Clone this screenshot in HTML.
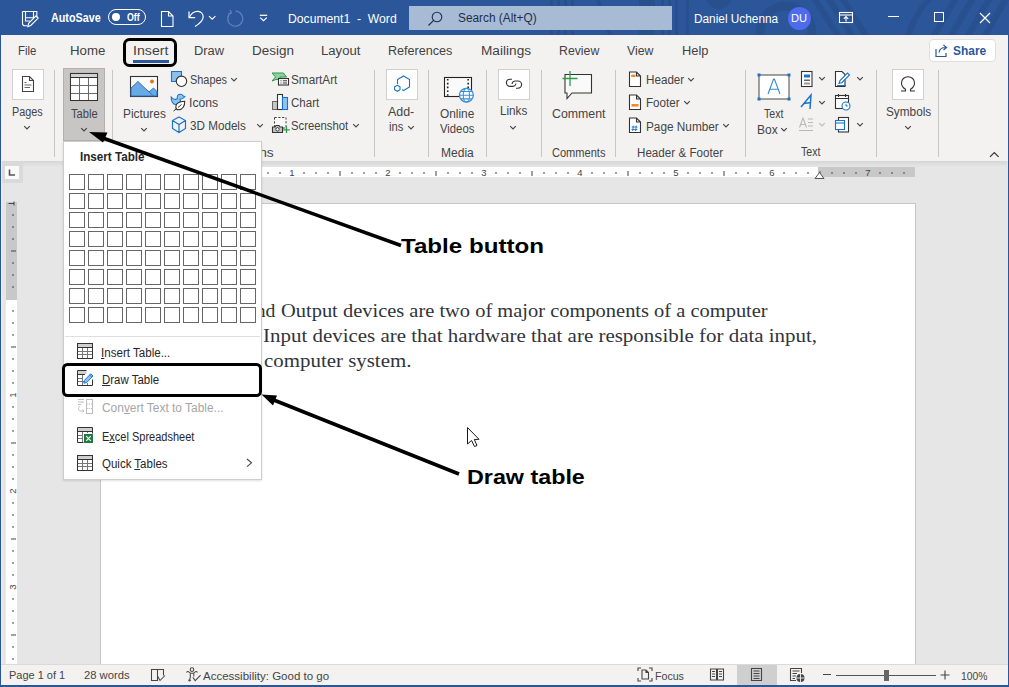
<!DOCTYPE html>
<html><head><meta charset="utf-8">
<style>
*{box-sizing:border-box}
html,body{margin:0;padding:0}
body{width:1009px;height:687px;overflow:hidden;position:relative;background:#e6e6e6;font-family:'Liberation Sans',sans-serif}
.a{position:absolute}
.t{position:absolute;white-space:nowrap;line-height:1;transform-origin:0 0}
svg{position:absolute;overflow:visible}
</style></head><body>
<!-- title bar -->
<div class="a" style="left:0;top:0;width:1009px;height:35px;background:#2b579a;overflow:hidden">
 <svg style="left:0;top:0" width="1009" height="35">
  <g fill="#28508f">
   <rect x="550" y="0" width="3" height="35"/><rect x="557" y="0" width="3" height="35"/><rect x="564" y="0" width="3" height="35"/><rect x="571" y="0" width="3" height="35"/>
   <polygon points="596,0 600,0 612,35 608,35"/>
   <rect x="639" y="0" width="16" height="35"/>
   <rect x="661" y="0" width="3" height="35"/><rect x="668" y="0" width="3" height="35"/><rect x="675" y="0" width="3" height="35"/>
   <rect x="686" y="0" width="3" height="35"/>
   <polygon points="812,0 819,0 841,35 834,35"/><polygon points="826,0 833,0 855,35 848,35"/><polygon points="840,0 847,0 869,35 862,35"/>
   <polygon points="931,35 951,0 958,0 938,35"/><polygon points="948,35 968,0 975,0 955,35"/><polygon points="965,35 985,0 992,0 972,35"/><polygon points="982,35 1002,0 1009,0 989,35"/>
  </g>
  <circle cx="719" cy="-4" r="13" fill="#28508f"/>
  <circle cx="786" cy="32" r="26" fill="none" stroke="#28508f" stroke-width="9"/>
  <path d="M905 35 C910 22 915 10 925 0 L932 0 C922 10 916 22 912 35 Z" fill="#28508f"/>
 </svg>
</div>
<!-- search box -->
<div class="a" style="left:409px;top:6px;width:263px;height:24px;background:#a8bbd5"></div>
<svg style="left:426px;top:10px" width="20" height="18"><circle cx="11" cy="7" r="4.8" fill="none" stroke="#1e2f4a" stroke-width="1.1"/><line x1="7.6" y1="10.4" x2="2.5" y2="15.5" stroke="#1e2f4a" stroke-width="1.2"/></svg>
<!-- title bar icons -->
<svg style="left:21px;top:10px" width="19" height="19" fill="none" stroke="#fff" stroke-width="1.1">
 <path d="M1.5 1.5 H15.8 V7.2"/>
 <path d="M1.5 1.5 V13.2 Q1.5 15.8 4 15.8 H6.2"/>
 <path d="M4.5 1.5 V7.8 H12.5 V1.5"/>
 <path d="M4.5 7.8 V11 H9"/>
 <path d="M6.8 16.6 L7.6 13.3 L15 5.9 L17.2 8.1 L9.8 15.5 Z"/>
</svg>
<div class="a" style="left:108px;top:9px;width:38px;height:16px;border:1.1px solid #fff;border-radius:8px"></div>
<div class="a" style="left:112px;top:13px;width:8px;height:8px;background:#fff;border-radius:50%"></div>
<svg style="left:160px;top:10px" width="15" height="18" fill="none" stroke="#fff" stroke-width="1.1"><path d="M1.5 1.5 H8.5 L13 6 V16.5 H1.5 Z M8.5 1.5 V6 H13"/></svg>
<svg style="left:187px;top:9px" width="20" height="20" fill="none" stroke="#fff" stroke-width="1.2"><path d="M2 2.5 V8.6 H8.2"/><path d="M2.4 8.2 C4.5 4.2 8 2.2 11 2.4 C14 2.6 16.2 5 16.2 8 C16.2 11 13.5 14 8 17.6"/></svg>
<svg style="left:208px;top:15px" width="9" height="6" fill="none" stroke="#fff" stroke-width="1.1"><path d="M1 1.2 L4.2 4.2 L7.4 1.2"/></svg>
<svg style="left:225px;top:9px" width="20" height="20" fill="none" stroke="#5f82bb" stroke-width="1.2"><path d="M6 3.5 A7.5 7.5 0 1 0 10.5 2.2"/><path d="M5 1 L6.5 4 L3.5 5"/></svg>
<svg style="left:258px;top:13px" width="11" height="10" fill="none" stroke="#fff" stroke-width="1.25"><path d="M1.8 2.3 H9.2"/><path d="M2.2 4.6 L5.5 7.6 L8.8 4.6"/></svg>
<!-- avatar -->
<div class="a" style="left:788px;top:7px;width:23px;height:23px;background:#4f6bed;border-radius:50%"></div>
<svg style="left:838px;top:11px" width="16" height="14" fill="none" stroke="#fff" stroke-width="1.1"><rect x="1.5" y="1.5" width="13" height="10"/><path d="M1.5 4 H14.5"/><path d="M8 10.5 V5.5 M5.8 7.8 L8 5.5 L10.2 7.8"/></svg>
<div class="a" style="left:888px;top:16px;width:11px;height:1.2px;background:#fff"></div>
<div class="a" style="left:934px;top:12px;width:10px;height:10px;border:1.1px solid #fff"></div>
<svg style="left:979px;top:12px" width="12" height="12" stroke="#fff" stroke-width="1.2"><path d="M1 1 L11 11 M11 1 L1 11"/></svg>

<!-- ribbon -->
<div class="a" style="left:0;top:35px;width:1009px;height:126px;background:#f3f2f1;border-left:1px solid #2b579a;border-right:1px solid #2b579a"></div>
<!-- insert underline -->
<div class="a" style="left:133px;top:60px;width:36px;height:3px;background:#2b579a"></div>
<!-- share button -->
<div class="a" style="left:929px;top:39px;width:67px;height:23px;background:#fff;border:1px solid #e1dfdd;border-radius:4px"></div>
<svg style="left:935px;top:43px" width="14" height="15" fill="none" stroke="#2b579a" stroke-width="1.2"><path d="M1 6 V13.5 H11 V10"/><path d="M4 9.5 C4.5 6 7 4.5 10.5 4.5 M8.5 2 L11.5 4.5 L8.5 7"/></svg>

<!-- separators -->
<div class="a" style="left:54px;top:70px;width:1px;height:87px;background:#c8c6c4"></div>
<div class="a" style="left:112px;top:70px;width:1px;height:87px;background:#c8c6c4"></div>
<div class="a" style="left:374px;top:70px;width:1px;height:87px;background:#c8c6c4"></div>
<div class="a" style="left:428px;top:70px;width:1px;height:87px;background:#c8c6c4"></div>
<div class="a" style="left:486px;top:70px;width:1px;height:87px;background:#c8c6c4"></div>
<div class="a" style="left:541px;top:70px;width:1px;height:87px;background:#c8c6c4"></div>
<div class="a" style="left:615px;top:70px;width:1px;height:87px;background:#c8c6c4"></div>
<div class="a" style="left:745px;top:70px;width:1px;height:87px;background:#c8c6c4"></div>
<div class="a" style="left:876px;top:70px;width:1px;height:87px;background:#c8c6c4"></div>
<div class="a" style="left:938px;top:70px;width:1px;height:87px;background:#c8c6c4"></div>

<!-- Pages -->
<div class="a" style="left:12px;top:69px;width:32px;height:31px;background:#fff;border:1px solid #d2d0ce"></div>
<svg style="left:21px;top:75px" width="14" height="18" fill="none" stroke="#444" stroke-width="1.1"><path d="M1.5 1.5 H8.5 L12.5 5.5 V16.5 H1.5 Z M8.5 1.5 V5.5 H12.5"/><path d="M3.5 7.5 H5.5 M3.5 10 H10.5 M3.5 12.5 H9" stroke="#666"/></svg>
<!-- Table button pressed -->
<div class="a" style="left:63px;top:68px;width:42px;height:73px;background:#c8c6c4;border:1px solid #b3b0ad"></div>
<svg style="left:69px;top:72px" width="31" height="30" fill="none" stroke="#333" stroke-width="1.05">
 <rect x="1.5" y="1.5" width="27" height="27" fill="#fff"/>
 <rect x="1.5" y="1.5" width="27" height="4" fill="#d4d4d4"/>
 <path d="M2 13.5 H28 M2 21.5 H28 M10.5 6 V28 M19.5 6 V28" stroke="#6a6a6a"/>
</svg>
<!-- Pictures -->
<svg style="left:129px;top:75px" width="31" height="23">
 <rect x="1.5" y="1.5" width="27" height="20" fill="#fafafa" stroke="#333" stroke-width="1.1"/>
 <path d="M2 21 V13 L9 6.5 L20 17 L24.5 13 L28 16.5 V21 Z" fill="#69a9e4" stroke="#2b6cb8" stroke-width="0.9"/>
 <path d="M17.5 14.5 L24.5 21" stroke="#2b6cb8" stroke-width="0.9"/>
 <circle cx="23" cy="6.5" r="1.9" fill="#e8711a"/>
</svg>
<!-- Shapes -->
<svg style="left:170px;top:70px" width="19" height="18">
 <path d="M1.5 1.5 H11.5 V6 A5.5 5.5 0 0 0 6 11.5 H1.5 Z" fill="#8cc0ec" stroke="#1a73c8" stroke-width="1.1"/>
 <circle cx="11.5" cy="11.3" r="5.2" fill="#fff" stroke="#333" stroke-width="1.1"/>
</svg>
<!-- Icons -->
<svg style="left:166px;top:90px" width="24" height="24">
 <path d="M5.2 7 C5 11 7 14.5 9.5 14.5 C12 14.5 14.5 12.5 14.5 10.5 L14 9.3 C16 9 18.6 7.3 18.9 6.6 L17.3 6 C16.8 5 15.8 4.2 14.2 4.2 C12.2 4.2 11 5.5 11.2 8.8 C9.5 9.8 7 9.2 5.2 7 Z" fill="#8dc4f0" stroke="#1a73c8" stroke-width="1.1"/>
 <path d="M18.7 11.2 C13 11.3 9.8 13.5 9.8 17 C9.8 19 11.2 19.8 12.7 19.8 C16.5 19.8 19 16 18.7 11.2 Z" fill="#fff" stroke="#333" stroke-width="1.1"/>
 <path d="M10.8 18.6 L7.5 21 M12 17.5 L15.5 14.5" fill="none" stroke="#333" stroke-width="1"/>
</svg>
<!-- 3D Models -->
<svg style="left:171px;top:116px" width="16" height="18" fill="none" stroke="#1a73c8" stroke-width="1.2">
 <path d="M8 1 L14.5 4.5 V12.5 L8 16.5 L1.5 12.5 V4.5 Z M1.5 4.5 L8 8.5 L14.5 4.5 M8 8.5 V16.5"/>
</svg>
<svg style="left:255.6px;top:122.9px" width="9" height="6" fill="none" stroke="#444" stroke-width="1.15"><path d="M1.2 1.2 L4 4 L6.8 1.2"/></svg>
<!-- SmartArt -->
<svg style="left:271px;top:72px" width="19" height="14">
 <path d="M1 1 H12.5 L15.5 5 H9 V7.5 H5 L1 9 L4.5 5 Z" fill="#8fd19e" stroke="#2e9b47" stroke-width="1"/>
 <rect x="7.5" y="6.5" width="10" height="6.5" fill="#fff" stroke="#333" stroke-width="1.1"/>
 <path d="M9.5 8.8 H10.5 M11.8 8.8 H16 M9.5 11 H10.5 M11.8 11 H16" stroke="#333" stroke-width="1"/>
</svg>
<!-- Chart -->
<svg style="left:271px;top:93px" width="19" height="18">
 <rect x="1.5" y="8.5" width="5" height="8" fill="#c8c6c4" stroke="#666" stroke-width="1"/>
 <rect x="6.5" y="1.5" width="5" height="15" fill="#fff" stroke="#333" stroke-width="1.1"/>
 <rect x="11.5" y="4.5" width="5" height="12" fill="#8dc4f0" stroke="#1a73c8" stroke-width="1.1"/>
</svg>
<!-- Screenshot -->
<svg style="left:271px;top:116px" width="20" height="18">
 <rect x="3.5" y="1.5" width="11.5" height="10.5" fill="#f8f8f8" stroke="#444" stroke-width="1" stroke-dasharray="2.2 1.6"/>
 <path d="M1.5 11 H4 L5 9.5 H8 L9 11 H11.5 V16.5 H1.5 Z" fill="#c8c6c4" stroke="#333" stroke-width="1.1"/>
 <circle cx="6.5" cy="13.3" r="1.7" fill="#fff" stroke="#333" stroke-width="1"/>
 <path d="M15.5 10.5 V17 M12.2 13.8 H18.8" stroke="#2e9b47" stroke-width="1.3"/>
</svg>
<svg style="left:229.6px;top:77.2px" width="9" height="6" fill="none" stroke="#444" stroke-width="1.15"><path d="M1.2 1.2 L4 4 L6.8 1.2"/></svg>
<svg style="left:351.9px;top:122.9px" width="9" height="6" fill="none" stroke="#444" stroke-width="1.15"><path d="M1.2 1.2 L4 4 L6.8 1.2"/></svg>
<!-- Add-ins -->
<div class="a" style="left:386px;top:69px;width:32px;height:31px;background:#fff;border:1px solid #d2d0ce"></div>
<svg style="left:393px;top:74px" width="20" height="20" fill="none" stroke="#1a73c8" stroke-width="1.1">
 <path d="M4.5 10 V5.5 L10.5 2 L16.5 5.5 V13 L10.5 16.5 L9 15.6"/>
 <path d="M4.3 11.3 L7 12.8 V15.8 L4.3 17.3 L1.6 15.8 V12.8 Z"/>
</svg>
<svg style="left:406.8px;top:124.7px" width="9" height="6" fill="none" stroke="#444" stroke-width="1.15"><path d="M1.2 1.2 L4 4 L6.8 1.2"/></svg>
<!-- Online Videos -->
<svg style="left:443px;top:76px" width="36" height="30">
 <rect x="1.5" y="1.5" width="27" height="19" fill="#fafafa" stroke="#222" stroke-width="1.1"/>
 <path d="M4.7 3 V20 M25.2 3 V20" stroke="#222" stroke-width="1.6" stroke-dasharray="1.6 2.2"/>
 <circle cx="23.4" cy="19.2" r="6.9" fill="#fff" stroke="#3a8fd8" stroke-width="1.3"/>
 <path d="M16.5 19.2 H30.3 M17.8 15.5 H29 M17.8 22.9 H29" stroke="#3a8fd8" stroke-width="1.1"/>
 <ellipse cx="23.4" cy="19.2" rx="3.1" ry="6.9" fill="none" stroke="#3a8fd8" stroke-width="1.1"/>
</svg>
<!-- Links -->
<div class="a" style="left:498px;top:69px;width:32px;height:31px;background:#fff;border:1px solid #d2d0ce"></div>
<svg style="left:504px;top:77px" width="20" height="14" fill="none" stroke="#333" stroke-width="1.15">
 <path d="M8 2.2 H6 A3.6 3.6 0 0 0 6 9.4 H9 A3.6 3.6 0 0 0 12 6.5"/>
 <path d="M12 11.2 H14 A3.6 3.6 0 0 0 14 4 H11 A3.6 3.6 0 0 0 8 7"/>
</svg>
<svg style="left:509.4px;top:124.7px" width="9" height="6" fill="none" stroke="#444" stroke-width="1.15"><path d="M1.2 1.2 L4 4 L6.8 1.2"/></svg>
<!-- Comment -->
<svg style="left:560px;top:70px" width="34" height="31">
 <path d="M5 4.5 H31.5 V23 H12 L7 28.5 V23 H5 Z" fill="#fafafa" stroke="#333" stroke-width="1.1"/>
 <path d="M10 1 V16 M2.5 8.5 H17.5" stroke="#2e9b47" stroke-width="1.3"/>
</svg>
<!-- Header / Footer / Page Number -->
<svg style="left:628px;top:71px" width="14" height="17">
 <path d="M1.5 1 H8.5 L12.5 5 V15.5 H1.5 Z M8.5 1 V5 H12.5" fill="#fff" stroke="#333" stroke-width="1.1"/>
 <rect x="3.2" y="3.6" width="4.3" height="2.4" fill="#ef8a2e"/>
</svg>
<svg style="left:628px;top:94px" width="14" height="17">
 <path d="M1.5 1 H8.5 L12.5 5 V15.5 H1.5 Z M8.5 1 V5 H12.5" fill="#fff" stroke="#333" stroke-width="1.1"/>
 <rect x="3.5" y="10" width="7" height="2.6" fill="#ef8a2e"/>
</svg>
<svg style="left:628px;top:117px" width="14" height="17">
 <path d="M1.5 1 H8.5 L12.5 5 V15.5 H1.5 Z M8.5 1 V5 H12.5" fill="#fff" stroke="#333" stroke-width="1.1"/>
 <path d="M5.3 8.5 L4.7 14 M8.3 8.5 L7.7 14 M3.7 10 H9.5 M3.5 12.5 H9.3" stroke="#1a73c8" stroke-width="0.9"/>
</svg>
<svg style="left:686.9px;top:77.1px" width="9" height="6" fill="none" stroke="#444" stroke-width="1.15"><path d="M1.2 1.2 L4 4 L6.8 1.2"/></svg>
<svg style="left:682.7px;top:100.0px" width="9" height="6" fill="none" stroke="#444" stroke-width="1.15"><path d="M1.2 1.2 L4 4 L6.8 1.2"/></svg>
<svg style="left:721.5px;top:123.4px" width="9" height="6" fill="none" stroke="#444" stroke-width="1.15"><path d="M1.2 1.2 L4 4 L6.8 1.2"/></svg>
<!-- Text Box -->
<svg style="left:757px;top:73px" width="34" height="28">
 <rect x="2" y="2" width="30" height="24" fill="#fff" stroke="#444" stroke-width="1"/>
 <g fill="#1a73c8"><rect x="0.5" y="0.5" width="3" height="3"/><rect x="30.5" y="0.5" width="3" height="3"/><rect x="0.5" y="24.5" width="3" height="3"/><rect x="30.5" y="24.5" width="3" height="3"/></g>
 <path d="M11 21 L16.6 6 H17.4 L23 21 M12.8 16.2 H21.2" fill="none" stroke="#2f8ad8" stroke-width="1.1"/>
</svg>
<svg style="left:780.4px;top:127.1px" width="9" height="6" fill="none" stroke="#444" stroke-width="1.15"><path d="M1.2 1.2 L4 4 L6.8 1.2"/></svg>
<!-- quick parts -->
<svg style="left:800px;top:70px" width="14" height="18">
 <rect x="1.5" y="1.5" width="10.5" height="15" fill="#fff" stroke="#333" stroke-width="1.1"/>
 <rect x="4" y="4.5" width="6" height="3" fill="#1a73c8"/>
 <rect x="4" y="9.5" width="6" height="1.5" fill="#666"/><rect x="4" y="12.5" width="6" height="2" fill="#999"/>
</svg>
<!-- wordart -->
<svg style="left:799px;top:93px" width="16" height="18" fill="none" stroke="#1a73c8" stroke-width="1.5"><path d="M2 14 L12 2 L11 16 M5 10.5 L12 9.5"/></svg>
<!-- drop cap disabled -->
<svg style="left:798px;top:116px" width="16" height="17" fill="none" stroke="#b8b8b8" stroke-width="1.1"><path d="M1.5 11.5 L5 2 L8.5 11.5 M2.8 8.5 H7.2 M10 3 H15 M10 6.5 H15 M10 10 H15 M1 14.5 H15"/></svg>
<svg style="left:817.8px;top:99.7px" width="9" height="6" fill="none" stroke="#444" stroke-width="1.15"><path d="M1.2 1.2 L4 4 L6.8 1.2"/></svg>
<svg style="left:817.8px;top:76.4px" width="9" height="6" fill="none" stroke="#444" stroke-width="1.15"><path d="M1.2 1.2 L4 4 L6.8 1.2"/></svg>
<svg style="left:817.8px;top:121.8px" width="9" height="6" fill="none" stroke="#bbb" stroke-width="1.15"><path d="M1.2 1.2 L4 4 L6.8 1.2"/></svg>
<!-- signature line -->
<svg style="left:834px;top:70px" width="17" height="18">
 <path d="M1.5 1.5 H8 L11 4.5 V16.5 H1.5 Z" fill="#fff" stroke="#333" stroke-width="1.1"/>
 <path d="M5 13.5 L6 10.5 L13.5 3 L15.5 5 L8 12.5 Z" fill="#fff" stroke="#1a73c8" stroke-width="1.1"/>
 <path d="M3 15.5 H12" stroke="#1a73c8" stroke-width="1"/>
</svg>
<!-- date time -->
<svg style="left:834px;top:93px" width="17" height="18">
 <rect x="1.5" y="2.5" width="13" height="13" fill="#fff" stroke="#333" stroke-width="1.1"/>
 <path d="M1.5 5.5 H14.5 M4.5 1 V4 M11.5 1 V4" stroke="#333" stroke-width="1.1"/>
 <circle cx="12" cy="13" r="4" fill="#fff" stroke="#1a73c8" stroke-width="1.1"/>
 <path d="M12 10.8 V13 H13.8" stroke="#1a73c8" stroke-width="1" fill="none"/>
</svg>
<!-- object -->
<svg style="left:834px;top:116px" width="17" height="18">
 <rect x="4.5" y="1.5" width="10" height="14.5" fill="#fff" stroke="#333" stroke-width="1.1"/>
 <rect x="1.5" y="4.5" width="9" height="9" fill="#fff" stroke="#1a73c8" stroke-width="1.1"/>
 <path d="M1.5 7 H10.5" stroke="#1a73c8" stroke-width="1.1"/>
</svg>
<svg style="left:856.0px;top:76.4px" width="9" height="6" fill="none" stroke="#444" stroke-width="1.15"><path d="M1.2 1.2 L4 4 L6.8 1.2"/></svg>
<svg style="left:856.0px;top:121.8px" width="9" height="6" fill="none" stroke="#444" stroke-width="1.15"><path d="M1.2 1.2 L4 4 L6.8 1.2"/></svg>
<!-- Symbols -->
<div class="a" style="left:892px;top:69px;width:32px;height:31px;background:#fff;border:1px solid #d2d0ce"></div>
<svg style="left:900px;top:76px" width="17" height="17" fill="none" stroke="#333" stroke-width="1.1"><path d="M1 15 H5.5 V13.3 C3 11.8 1.5 9.5 1.5 7 C1.5 3.3 4.3 0.8 8 0.8 C11.7 0.8 14.5 3.3 14.5 7 C14.5 9.5 13 11.8 10.5 13.3 V15 H15"/></svg>
<svg style="left:903.8px;top:124.8px" width="9" height="6" fill="none" stroke="#444" stroke-width="1.15"><path d="M1.2 1.2 L4 4 L6.8 1.2"/></svg>
<svg style="left:989px;top:151px" width="12" height="8" fill="none" stroke="#333" stroke-width="1.2"><path d="M1 5.8 L5.3 1.5 L9.6 5.8"/></svg>
<!-- chevrons under big buttons -->
<svg style="left:23.2px;top:125.0px" width="9" height="6" fill="none" stroke="#444" stroke-width="1.15"><path d="M1.2 1.2 L4 4 L6.8 1.2"/></svg>
<svg style="left:79.6px;top:126.9px" width="9" height="6" fill="none" stroke="#444" stroke-width="1.15"><path d="M1.2 1.2 L4 4 L6.8 1.2"/></svg>
<svg style="left:139.6px;top:126.8px" width="9" height="6" fill="none" stroke="#444" stroke-width="1.15"><path d="M1.2 1.2 L4 4 L6.8 1.2"/></svg>

<!-- ribbon shadow -->
<div class="a" style="left:1px;top:161px;width:1006px;height:6px;background:linear-gradient(#d6d6d6,#e6e6e6)"></div>
<!-- tab selector -->
<div class="a" style="left:1px;top:162px;width:22px;height:21px;background:#dadada"></div>
<div class="a" style="left:5px;top:166px;width:14px;height:13px;background:#fafafa"></div>
<svg style="left:8px;top:169px" width="8" height="8" fill="none" stroke="#555" stroke-width="1.6"><path d="M1.5 0.5 V6 H7"/></svg>
<!-- horizontal ruler -->
<div class="a" style="left:100px;top:167px;width:96px;height:10px;background:#c8c8c8"></div>
<div class="a" style="left:196px;top:167px;width:622px;height:10px;background:#fff"></div>
<div class="a" style="left:818px;top:167px;width:97px;height:10px;background:#c8c8c8"></div>

<!-- vertical ruler -->
<div class="a" style="left:6px;top:202px;width:11px;height:98px;background:#c8c8c8"></div>
<div class="a" style="left:6px;top:300px;width:11px;height:365px;background:#fff"></div>

<!-- page -->
<div class="a" style="left:100px;top:203px;width:816px;height:470px;background:#fff;border:1px solid #c6c6c6"></div>

<svg style="left:0;top:0" width="1009" height="687"><rect x="111.5" y="172" width="1" height="2" fill="#444"/><rect x="123.5" y="172" width="1" height="2" fill="#444"/><rect x="135.5" y="172" width="1" height="2" fill="#444"/><rect x="147.5" y="171" width="1" height="5" fill="#444"/><rect x="159.5" y="172" width="1" height="2" fill="#444"/><rect x="171.5" y="172" width="1" height="2" fill="#444"/><rect x="183.5" y="172" width="1" height="2" fill="#444"/><rect x="207.5" y="172" width="1" height="2" fill="#444"/><rect x="219.5" y="172" width="1" height="2" fill="#444"/><rect x="231.5" y="172" width="1" height="2" fill="#444"/><rect x="243.5" y="171" width="1" height="5" fill="#444"/><rect x="255.5" y="172" width="1" height="2" fill="#444"/><rect x="267.5" y="172" width="1" height="2" fill="#444"/><rect x="279.5" y="172" width="1" height="2" fill="#444"/><text x="292" y="176" font-size="9.5" text-anchor="middle" fill="#444" font-family="Liberation Sans">1</text><rect x="303.5" y="172" width="1" height="2" fill="#444"/><rect x="315.5" y="172" width="1" height="2" fill="#444"/><rect x="327.5" y="172" width="1" height="2" fill="#444"/><rect x="339.5" y="171" width="1" height="5" fill="#444"/><rect x="351.5" y="172" width="1" height="2" fill="#444"/><rect x="363.5" y="172" width="1" height="2" fill="#444"/><rect x="375.5" y="172" width="1" height="2" fill="#444"/><text x="388" y="176" font-size="9.5" text-anchor="middle" fill="#444" font-family="Liberation Sans">2</text><rect x="399.5" y="172" width="1" height="2" fill="#444"/><rect x="411.5" y="172" width="1" height="2" fill="#444"/><rect x="423.5" y="172" width="1" height="2" fill="#444"/><rect x="435.5" y="171" width="1" height="5" fill="#444"/><rect x="447.5" y="172" width="1" height="2" fill="#444"/><rect x="459.5" y="172" width="1" height="2" fill="#444"/><rect x="471.5" y="172" width="1" height="2" fill="#444"/><text x="484" y="176" font-size="9.5" text-anchor="middle" fill="#444" font-family="Liberation Sans">3</text><rect x="495.5" y="172" width="1" height="2" fill="#444"/><rect x="507.5" y="172" width="1" height="2" fill="#444"/><rect x="519.5" y="172" width="1" height="2" fill="#444"/><rect x="531.5" y="171" width="1" height="5" fill="#444"/><rect x="543.5" y="172" width="1" height="2" fill="#444"/><rect x="555.5" y="172" width="1" height="2" fill="#444"/><rect x="567.5" y="172" width="1" height="2" fill="#444"/><text x="580" y="176" font-size="9.5" text-anchor="middle" fill="#444" font-family="Liberation Sans">4</text><rect x="591.5" y="172" width="1" height="2" fill="#444"/><rect x="603.5" y="172" width="1" height="2" fill="#444"/><rect x="615.5" y="172" width="1" height="2" fill="#444"/><rect x="627.5" y="171" width="1" height="5" fill="#444"/><rect x="639.5" y="172" width="1" height="2" fill="#444"/><rect x="651.5" y="172" width="1" height="2" fill="#444"/><rect x="663.5" y="172" width="1" height="2" fill="#444"/><text x="676" y="176" font-size="9.5" text-anchor="middle" fill="#444" font-family="Liberation Sans">5</text><rect x="687.5" y="172" width="1" height="2" fill="#444"/><rect x="699.5" y="172" width="1" height="2" fill="#444"/><rect x="711.5" y="172" width="1" height="2" fill="#444"/><rect x="723.5" y="171" width="1" height="5" fill="#444"/><rect x="735.5" y="172" width="1" height="2" fill="#444"/><rect x="747.5" y="172" width="1" height="2" fill="#444"/><rect x="759.5" y="172" width="1" height="2" fill="#444"/><text x="772" y="176" font-size="9.5" text-anchor="middle" fill="#444" font-family="Liberation Sans">6</text><rect x="783.5" y="172" width="1" height="2" fill="#444"/><rect x="795.5" y="172" width="1" height="2" fill="#444"/><rect x="807.5" y="172" width="1" height="2" fill="#444"/><rect x="819.5" y="171" width="1" height="5" fill="#444"/><rect x="831.5" y="172" width="1" height="2" fill="#444"/><rect x="843.5" y="172" width="1" height="2" fill="#444"/><rect x="855.5" y="172" width="1" height="2" fill="#444"/><text x="868" y="176" font-size="9.5" text-anchor="middle" fill="#444" font-family="Liberation Sans">7</text><rect x="879.5" y="172" width="1" height="2" fill="#444"/><rect x="891.5" y="172" width="1" height="2" fill="#444"/><rect x="903.5" y="172" width="1" height="2" fill="#444"/><path d="M815 178.5 L819.5 172.5 L824 178.5 Z" fill="#fff" stroke="#555" stroke-width="1"/></svg>
<svg style="left:0;top:0" width="1009" height="687"><rect x="12" y="214.5" width="2" height="1" fill="#444"/><rect x="12" y="226.5" width="2" height="1" fill="#444"/><rect x="12" y="238.5" width="2" height="1" fill="#444"/><rect x="11" y="250.5" width="5" height="1" fill="#444"/><rect x="12" y="262.5" width="2" height="1" fill="#444"/><rect x="12" y="274.5" width="2" height="1" fill="#444"/><rect x="12" y="286.5" width="2" height="1" fill="#444"/><rect x="12" y="310.5" width="2" height="1" fill="#444"/><rect x="12" y="322.5" width="2" height="1" fill="#444"/><rect x="12" y="334.5" width="2" height="1" fill="#444"/><rect x="11" y="346.5" width="5" height="1" fill="#444"/><rect x="12" y="358.5" width="2" height="1" fill="#444"/><rect x="12" y="370.5" width="2" height="1" fill="#444"/><rect x="12" y="382.5" width="2" height="1" fill="#444"/><text x="0" y="0" transform="translate(16.3 395) rotate(-90)" font-size="9.5" text-anchor="middle" fill="#444" font-family="Liberation Sans">1</text><rect x="12" y="406.5" width="2" height="1" fill="#444"/><rect x="12" y="418.5" width="2" height="1" fill="#444"/><rect x="12" y="430.5" width="2" height="1" fill="#444"/><rect x="11" y="442.5" width="5" height="1" fill="#444"/><rect x="12" y="454.5" width="2" height="1" fill="#444"/><rect x="12" y="466.5" width="2" height="1" fill="#444"/><rect x="12" y="478.5" width="2" height="1" fill="#444"/><text x="0" y="0" transform="translate(16.3 491) rotate(-90)" font-size="9.5" text-anchor="middle" fill="#444" font-family="Liberation Sans">2</text><rect x="12" y="502.5" width="2" height="1" fill="#444"/><rect x="12" y="514.5" width="2" height="1" fill="#444"/><rect x="12" y="526.5" width="2" height="1" fill="#444"/><rect x="11" y="538.5" width="5" height="1" fill="#444"/><rect x="12" y="550.5" width="2" height="1" fill="#444"/><rect x="12" y="562.5" width="2" height="1" fill="#444"/><rect x="12" y="574.5" width="2" height="1" fill="#444"/><text x="0" y="0" transform="translate(16.3 587) rotate(-90)" font-size="9.5" text-anchor="middle" fill="#444" font-family="Liberation Sans">3</text><rect x="12" y="598.5" width="2" height="1" fill="#444"/><rect x="12" y="610.5" width="2" height="1" fill="#444"/><rect x="12" y="622.5" width="2" height="1" fill="#444"/><rect x="11" y="634.5" width="5" height="1" fill="#444"/><rect x="12" y="646.5" width="2" height="1" fill="#444"/><rect x="12" y="658.5" width="2" height="1" fill="#444"/><path d="M8.5 203.5 H14 M14 201.5 V205.5" stroke="#444" stroke-width="1"/></svg>
<div class="t" id="t0" style="left:51.34px;top:11.85px;font-size:12px;color:#ffffff;font-weight:bold;font-family:'Liberation Sans', sans-serif;transform:scaleX(0.8981);">AutoSave</div>
<div class="t" id="t1" style="left:127.00px;top:12.19px;font-size:11px;color:#ffffff;font-weight:bold;font-family:'Liberation Sans', sans-serif;transform:scaleX(0.8015);">Off</div>
<div class="t" id="t2" style="left:287.79px;top:13.05px;font-size:12px;color:#ffffff;font-weight:normal;font-family:'Liberation Sans', sans-serif;transform:scaleX(1.0144);">Document1&nbsp; -&nbsp; Word</div>
<div class="t" id="t3" style="left:458.45px;top:12.15px;font-size:12px;color:#1e2f4a;font-weight:normal;font-family:'Liberation Sans', sans-serif;transform:scaleX(0.9865);">Search (Alt+Q)</div>
<div class="t" id="t4" style="left:693.64px;top:12.65px;font-size:12px;color:#ffffff;font-weight:normal;font-family:'Liberation Sans', sans-serif;transform:scaleX(0.9851);">Daniel Uchenna</div>
<div class="t" id="t5" style="left:791.30px;top:13.19px;font-size:11px;color:#ffffff;font-weight:normal;font-family:'Liberation Sans', sans-serif;transform:scaleX(1.0080);">DU</div>
<div class="t" id="t6" style="left:18.49px;top:44.65px;font-size:12px;color:#424242;font-weight:normal;font-family:'Liberation Sans', sans-serif;transform:scaleX(0.9479);">File</div>
<div class="t" id="t7" style="left:69.62px;top:44.65px;font-size:12px;color:#424242;font-weight:normal;font-family:'Liberation Sans', sans-serif;transform:scaleX(1.1041);">Home</div>
<div class="t" id="t8" style="left:132.50px;top:44.65px;font-size:12px;color:#424242;font-weight:normal;font-family:'Liberation Sans', sans-serif;transform:scaleX(1.1796);">Insert</div>
<div class="t" id="t9" style="left:194.45px;top:44.65px;font-size:12px;color:#424242;font-weight:normal;font-family:'Liberation Sans', sans-serif;transform:scaleX(1.0734);">Draw</div>
<div class="t" id="t10" style="left:252.13px;top:44.65px;font-size:12px;color:#424242;font-weight:normal;font-family:'Liberation Sans', sans-serif;transform:scaleX(1.1241);">Design</div>
<div class="t" id="t11" style="left:321.30px;top:44.65px;font-size:12px;color:#424242;font-weight:normal;font-family:'Liberation Sans', sans-serif;transform:scaleX(1.0931);">Layout</div>
<div class="t" id="t12" style="left:388.30px;top:44.65px;font-size:12px;color:#424242;font-weight:normal;font-family:'Liberation Sans', sans-serif;transform:scaleX(1.0496);">References</div>
<div class="t" id="t13" style="left:480.98px;top:44.65px;font-size:12px;color:#424242;font-weight:normal;font-family:'Liberation Sans', sans-serif;transform:scaleX(1.1370);">Mailings</div>
<div class="t" id="t14" style="left:558.62px;top:44.65px;font-size:12px;color:#424242;font-weight:normal;font-family:'Liberation Sans', sans-serif;transform:scaleX(1.0243);">Review</div>
<div class="t" id="t15" style="left:627.00px;top:44.65px;font-size:12px;color:#424242;font-weight:normal;font-family:'Liberation Sans', sans-serif;transform:scaleX(1.0258);">View</div>
<div class="t" id="t16" style="left:681.98px;top:44.65px;font-size:12px;color:#424242;font-weight:normal;font-family:'Liberation Sans', sans-serif;transform:scaleX(1.0730);">Help</div>
<div class="t" id="t17" style="left:952.68px;top:43.80px;font-size:13px;color:#2b579a;font-weight:bold;font-family:'Liberation Sans', sans-serif;transform:scaleX(0.9194);">Share</div>
<div class="t" id="t18" style="left:12.15px;top:105.85px;font-size:12px;color:#444444;font-weight:normal;font-family:'Liberation Sans', sans-serif;transform:scaleX(0.9054);">Pages</div>
<div class="t" id="t19" style="left:70.68px;top:108.05px;font-size:12px;color:#444444;font-weight:normal;font-family:'Liberation Sans', sans-serif;transform:scaleX(0.9309);">Table</div>
<div class="t" id="t20" style="left:122.62px;top:107.55px;font-size:12px;color:#444444;font-weight:normal;font-family:'Liberation Sans', sans-serif;transform:scaleX(0.9885);">Pictures</div>
<div class="t" id="t21" style="left:190.00px;top:73.85px;font-size:12px;color:#444444;font-weight:normal;font-family:'Liberation Sans', sans-serif;transform:scaleX(0.9091);">Shapes</div>
<div class="t" id="t22" style="left:189.15px;top:96.85px;font-size:12px;color:#444444;font-weight:normal;font-family:'Liberation Sans', sans-serif;transform:scaleX(1.0192);">Icons</div>
<div class="t" id="t23" style="left:190.00px;top:119.85px;font-size:12px;color:#444444;font-weight:normal;font-family:'Liberation Sans', sans-serif;transform:scaleX(0.9729);">3D Models</div>
<div class="t" id="t24" style="left:291.34px;top:73.85px;font-size:12px;color:#444444;font-weight:normal;font-family:'Liberation Sans', sans-serif;transform:scaleX(0.9792);">SmartArt</div>
<div class="t" id="t25" style="left:291.34px;top:96.85px;font-size:12px;color:#444444;font-weight:normal;font-family:'Liberation Sans', sans-serif;transform:scaleX(0.9599);">Chart</div>
<div class="t" id="t26" style="left:291.20px;top:119.85px;font-size:12px;color:#444444;font-weight:normal;font-family:'Liberation Sans', sans-serif;transform:scaleX(0.9418);">Screenshot</div>
<div class="t" id="t27" style="left:388.00px;top:105.85px;font-size:12px;color:#444444;font-weight:normal;font-family:'Liberation Sans', sans-serif;transform:scaleX(1.0337);">Add-</div>
<div class="t" id="t28" style="left:389.30px;top:121.35px;font-size:12px;color:#444444;font-weight:normal;font-family:'Liberation Sans', sans-serif;transform:scaleX(0.9322);">ins</div>
<div class="t" id="t29" style="left:440.49px;top:107.85px;font-size:12px;color:#444444;font-weight:normal;font-family:'Liberation Sans', sans-serif;transform:scaleX(0.9883);">Online</div>
<div class="t" id="t30" style="left:440.40px;top:123.45px;font-size:12px;color:#444444;font-weight:normal;font-family:'Liberation Sans', sans-serif;transform:scaleX(0.9404);">Videos</div>
<div class="t" id="t31" style="left:441.30px;top:146.65px;font-size:12px;color:#444444;font-weight:normal;font-family:'Liberation Sans', sans-serif;transform:scaleX(1.0020);">Media</div>
<div class="t" id="t32" style="left:499.98px;top:105.45px;font-size:12px;color:#444444;font-weight:normal;font-family:'Liberation Sans', sans-serif;transform:scaleX(0.9727);">Links</div>
<div class="t" id="t33" style="left:551.68px;top:108.15px;font-size:12px;color:#444444;font-weight:normal;font-family:'Liberation Sans', sans-serif;transform:scaleX(1.0290);">Comment</div>
<div class="t" id="t34" style="left:551.68px;top:146.85px;font-size:12px;color:#444444;font-weight:normal;font-family:'Liberation Sans', sans-serif;transform:scaleX(0.9205);">Comments</div>
<div class="t" id="t35" style="left:645.62px;top:74.45px;font-size:12px;color:#444444;font-weight:normal;font-family:'Liberation Sans', sans-serif;transform:scaleX(0.9713);">Header</div>
<div class="t" id="t36" style="left:645.62px;top:97.35px;font-size:12px;color:#444444;font-weight:normal;font-family:'Liberation Sans', sans-serif;transform:scaleX(0.9688);">Footer</div>
<div class="t" id="t37" style="left:645.62px;top:120.65px;font-size:12px;color:#444444;font-weight:normal;font-family:'Liberation Sans', sans-serif;transform:scaleX(0.9832);">Page Number</div>
<div class="t" id="t38" style="left:637.30px;top:146.85px;font-size:12px;color:#444444;font-weight:normal;font-family:'Liberation Sans', sans-serif;transform:scaleX(0.9695);">Header &amp; Footer</div>
<div class="t" id="t39" style="left:764.00px;top:107.85px;font-size:12px;color:#444444;font-weight:normal;font-family:'Liberation Sans', sans-serif;transform:scaleX(0.8821);">Text</div>
<div class="t" id="t40" style="left:757.30px;top:123.85px;font-size:12px;color:#444444;font-weight:normal;font-family:'Liberation Sans', sans-serif;transform:scaleX(1.0008);">Box</div>
<div class="t" id="t41" style="left:801.00px;top:146.35px;font-size:12px;color:#444444;font-weight:normal;font-family:'Liberation Sans', sans-serif;transform:scaleX(0.8827);">Text</div>
<div class="t" id="t42" style="left:885.51px;top:105.85px;font-size:12px;color:#444444;font-weight:normal;font-family:'Liberation Sans', sans-serif;transform:scaleX(0.9825);">Symbols</div>
<div class="t" id="t43" style="left:203.85px;top:146.85px;font-size:12px;color:#444444;font-weight:normal;font-family:'Liberation Sans', sans-serif;transform:scaleX(1.1492);">Illustrations</div>
<div class="t" id="t44" style="left:79.60px;top:151.25px;font-size:12px;color:#262626;font-weight:bold;font-family:'Liberation Sans', sans-serif;transform:scaleX(0.9717);z-index:6">Insert Table</div>
<div class="t" id="t45" style="left:101.38px;top:347.25px;font-size:12px;color:#262626;font-weight:normal;font-family:'Liberation Sans', sans-serif;transform:scaleX(0.9647);z-index:6"><u>I</u>nsert Table...</div>
<div class="t" id="t46" style="left:102.34px;top:374.15px;font-size:12px;color:#262626;font-weight:normal;font-family:'Liberation Sans', sans-serif;transform:scaleX(0.9545);z-index:6"><u>D</u>raw Table</div>
<div class="t" id="t47" style="left:101.64px;top:402.35px;font-size:12px;color:#a6a6a6;font-weight:normal;font-family:'Liberation Sans', sans-serif;transform:scaleX(0.9938);z-index:6">Con<u>v</u>ert Text to Table...</div>
<div class="t" id="t48" style="left:102.34px;top:430.85px;font-size:12px;color:#262626;font-weight:normal;font-family:'Liberation Sans', sans-serif;transform:scaleX(0.9172);z-index:6">E<u>x</u>cel Spreadsheet</div>
<div class="t" id="t49" style="left:102.34px;top:458.35px;font-size:12px;color:#262626;font-weight:normal;font-family:'Liberation Sans', sans-serif;transform:scaleX(0.9579);z-index:6">Quick <u>T</u>ables</div>
<div class="t" id="t50" style="left:9.00px;top:670.49px;font-size:11px;color:#444444;font-weight:normal;font-family:'Liberation Sans', sans-serif;transform:scaleX(0.9974);z-index:4">Page 1 of 1</div>
<div class="t" id="t51" style="left:84.49px;top:670.49px;font-size:11px;color:#444444;font-weight:normal;font-family:'Liberation Sans', sans-serif;transform:scaleX(1.0192);z-index:4">28 words</div>
<div class="t" id="t52" style="left:203.00px;top:671.19px;font-size:11px;color:#444444;font-weight:normal;font-family:'Liberation Sans', sans-serif;transform:scaleX(1.0471);z-index:4">Accessibility: Good to go</div>
<div class="t" id="t53" style="left:655.34px;top:671.19px;font-size:11px;color:#444444;font-weight:normal;font-family:'Liberation Sans', sans-serif;transform:scaleX(0.9659);z-index:4">Focus</div>
<div class="t" id="t54" style="left:961.47px;top:671.19px;font-size:11px;color:#444444;font-weight:normal;font-family:'Liberation Sans', sans-serif;transform:scaleX(0.9391);z-index:4">100%</div>
<div class="t" id="t55" style="left:281.40px;top:301.09px;font-size:19px;color:#30343a;font-weight:normal;font-family:'Liberation Serif', serif;transform:scaleX(1.0763);">Output devices are two of major components of a computer</div>
<div class="t" id="t56" style="left:246.50px;top:301.09px;font-size:19px;color:#30343a;font-weight:normal;font-family:'Liberation Serif', serif;transform:scaleX(1.0382);">and</div>
<div class="t" id="t57" style="left:263.20px;top:325.69px;font-size:19px;color:#30343a;font-weight:normal;font-family:'Liberation Serif', serif;transform:scaleX(1.1020);">Input devices are that hardware that are responsible for data input,</div>
<div class="t" id="t58" style="left:264.40px;top:350.59px;font-size:19px;color:#30343a;font-weight:normal;font-family:'Liberation Serif', serif;transform:scaleX(1.0999);">computer system.</div>
<div class="t" id="t59" style="left:401.00px;top:235.88px;font-size:20px;color:#000000;font-weight:bold;font-family:'Liberation Sans', sans-serif;transform:scaleX(1.2065);">Table button</div>
<div class="t" id="t60" style="left:466.64px;top:466.78px;font-size:20px;color:#000000;font-weight:bold;font-family:'Liberation Sans', sans-serif;transform:scaleX(1.1648);">Draw table</div>

<!-- window borders -->
<div class="a" style="left:0;top:35px;width:1px;height:652px;background:#2b579a;z-index:8"></div>
<div class="a" style="left:1008px;top:35px;width:1px;height:652px;background:#2b579a;z-index:8"></div>
<div class="a" style="left:1px;top:161px;width:1px;height:503px;background:#f0efee"></div>
<!-- status bar -->
<div class="a" style="left:0;top:664px;width:1009px;height:23px;background:#f3f2f1;border-top:1px solid #dadada;border-left:1px solid #2b579a;border-right:1px solid #2b579a;border-bottom:2px solid #2b579a;z-index:3"></div>
<div class="a" style="left:737px;top:665px;width:40px;height:20px;background:#cfcfcf;z-index:3"></div>
<svg style="left:150px;top:668px;z-index:4" width="17" height="15" fill="none" stroke="#444" stroke-width="1.05"><path d="M1.5 1.5 H7.5 V12.5 H1.5 Z M7.5 1.5 H13.5 V7.5"/><path d="M7.8 8.5 L10 12.5 L15 7.5"/></svg>
<svg style="left:185px;top:666px;z-index:4" width="17" height="17" fill="none" stroke="#444" stroke-width="1.05"><circle cx="7" cy="3.6" r="1.8"/><path d="M1.5 6.5 C2 5.2 3.3 5 4.3 6.3 C4.8 7 5.5 7.2 6 7.2 H8 C8.5 7.2 9.2 7 9.7 6.3 C10.7 5 12 5.2 12.5 6.5"/><path d="M5.3 7.3 V11.5 C5.3 13 3.8 13.8 3.8 14.6 C4.2 15.2 5.3 14.6 5.8 13.8 M8.8 7.3 V10.5"/><path d="M7.8 11.3 L10.2 14.6 L15.6 9.2"/></svg>
<svg style="left:637px;top:667px;z-index:4" width="16" height="15" fill="none" stroke="#444" stroke-width="1.1"><path d="M1 4 V1 H4 M12 1 H15 V4 M1 11 V14 H4 M12 14 H15 V11"/><path d="M5 3 H9 L11.5 5.5 V12 H5 Z M9 3 V5.5 H11.5"/></svg>
<svg style="left:709px;top:667px;z-index:4" width="16" height="15" fill="none" stroke="#444" stroke-width="1.1"><path d="M1.5 2 H7.5 V13 H1.5 Z M8.5 2 H14.5 V13 H8.5 Z M3 4.5 H6 M3 7 H6 M3 9.5 H6 M10 4.5 H13 M10 7 H13 M10 9.5 H13"/></svg>
<svg style="left:750px;top:667px;z-index:4" width="13" height="15" fill="none" stroke="#444" stroke-width="1.1"><path d="M1.5 1.5 H11.5 V13.5 H1.5 Z M3.5 4 H9.5 M3.5 6.5 H9.5 M3.5 9 H9.5 M3.5 11.5 H9.5"/></svg>
<svg style="left:789px;top:667px;z-index:4" width="17" height="16" fill="none" stroke="#444" stroke-width="1.1"><path d="M1.5 1.5 H12.5 V6 M1.5 1.5 V13.5 H7 M3.5 4 H10.5 M3.5 6.5 H8 M3.5 9 H7 M3.5 11.5 H6"/><circle cx="11.5" cy="11" r="4" fill="#444" stroke="none"/><path d="M7.5 11 H15.5 M11.5 7 V15" stroke="#f3f2f1" stroke-width="0.9"/></svg>
<div class="a" style="left:823px;top:674px;width:8px;height:1.2px;background:#444;z-index:4"></div>
<div class="a" style="left:836px;top:674.5px;width:100px;height:1.2px;background:#555;z-index:4"></div>
<div class="a" style="left:884px;top:670px;width:5px;height:11px;background:#666;z-index:4"></div>
<svg style="left:940px;top:670px;z-index:4" width="10" height="10" stroke="#444" stroke-width="1.1"><path d="M5 0.5 V9.5 M0.5 5 H9.5"/></svg>

<!-- dropdown -->
<div class="a" style="left:63px;top:141px;width:199px;height:339px;background:#fff;border:1px solid #cdcdcd;box-shadow:0 1px 2px rgba(0,0,0,0.12);z-index:5"></div>
<svg style="left:69px;top:174px;z-index:6" width="190" height="152"><rect x="0.5" y="0.5" width="15" height="15" fill="#fff" stroke="#666" stroke-width="1"/><rect x="19.5" y="0.5" width="15" height="15" fill="#fff" stroke="#666" stroke-width="1"/><rect x="38.5" y="0.5" width="15" height="15" fill="#fff" stroke="#666" stroke-width="1"/><rect x="57.5" y="0.5" width="15" height="15" fill="#fff" stroke="#666" stroke-width="1"/><rect x="76.5" y="0.5" width="15" height="15" fill="#fff" stroke="#666" stroke-width="1"/><rect x="95.5" y="0.5" width="15" height="15" fill="#fff" stroke="#666" stroke-width="1"/><rect x="114.5" y="0.5" width="15" height="15" fill="#fff" stroke="#666" stroke-width="1"/><rect x="133.5" y="0.5" width="15" height="15" fill="#fff" stroke="#666" stroke-width="1"/><rect x="152.5" y="0.5" width="15" height="15" fill="#fff" stroke="#666" stroke-width="1"/><rect x="171.5" y="0.5" width="15" height="15" fill="#fff" stroke="#666" stroke-width="1"/><rect x="0.5" y="19.5" width="15" height="15" fill="#fff" stroke="#666" stroke-width="1"/><rect x="19.5" y="19.5" width="15" height="15" fill="#fff" stroke="#666" stroke-width="1"/><rect x="38.5" y="19.5" width="15" height="15" fill="#fff" stroke="#666" stroke-width="1"/><rect x="57.5" y="19.5" width="15" height="15" fill="#fff" stroke="#666" stroke-width="1"/><rect x="76.5" y="19.5" width="15" height="15" fill="#fff" stroke="#666" stroke-width="1"/><rect x="95.5" y="19.5" width="15" height="15" fill="#fff" stroke="#666" stroke-width="1"/><rect x="114.5" y="19.5" width="15" height="15" fill="#fff" stroke="#666" stroke-width="1"/><rect x="133.5" y="19.5" width="15" height="15" fill="#fff" stroke="#666" stroke-width="1"/><rect x="152.5" y="19.5" width="15" height="15" fill="#fff" stroke="#666" stroke-width="1"/><rect x="171.5" y="19.5" width="15" height="15" fill="#fff" stroke="#666" stroke-width="1"/><rect x="0.5" y="38.5" width="15" height="15" fill="#fff" stroke="#666" stroke-width="1"/><rect x="19.5" y="38.5" width="15" height="15" fill="#fff" stroke="#666" stroke-width="1"/><rect x="38.5" y="38.5" width="15" height="15" fill="#fff" stroke="#666" stroke-width="1"/><rect x="57.5" y="38.5" width="15" height="15" fill="#fff" stroke="#666" stroke-width="1"/><rect x="76.5" y="38.5" width="15" height="15" fill="#fff" stroke="#666" stroke-width="1"/><rect x="95.5" y="38.5" width="15" height="15" fill="#fff" stroke="#666" stroke-width="1"/><rect x="114.5" y="38.5" width="15" height="15" fill="#fff" stroke="#666" stroke-width="1"/><rect x="133.5" y="38.5" width="15" height="15" fill="#fff" stroke="#666" stroke-width="1"/><rect x="152.5" y="38.5" width="15" height="15" fill="#fff" stroke="#666" stroke-width="1"/><rect x="171.5" y="38.5" width="15" height="15" fill="#fff" stroke="#666" stroke-width="1"/><rect x="0.5" y="57.5" width="15" height="15" fill="#fff" stroke="#666" stroke-width="1"/><rect x="19.5" y="57.5" width="15" height="15" fill="#fff" stroke="#666" stroke-width="1"/><rect x="38.5" y="57.5" width="15" height="15" fill="#fff" stroke="#666" stroke-width="1"/><rect x="57.5" y="57.5" width="15" height="15" fill="#fff" stroke="#666" stroke-width="1"/><rect x="76.5" y="57.5" width="15" height="15" fill="#fff" stroke="#666" stroke-width="1"/><rect x="95.5" y="57.5" width="15" height="15" fill="#fff" stroke="#666" stroke-width="1"/><rect x="114.5" y="57.5" width="15" height="15" fill="#fff" stroke="#666" stroke-width="1"/><rect x="133.5" y="57.5" width="15" height="15" fill="#fff" stroke="#666" stroke-width="1"/><rect x="152.5" y="57.5" width="15" height="15" fill="#fff" stroke="#666" stroke-width="1"/><rect x="171.5" y="57.5" width="15" height="15" fill="#fff" stroke="#666" stroke-width="1"/><rect x="0.5" y="76.5" width="15" height="15" fill="#fff" stroke="#666" stroke-width="1"/><rect x="19.5" y="76.5" width="15" height="15" fill="#fff" stroke="#666" stroke-width="1"/><rect x="38.5" y="76.5" width="15" height="15" fill="#fff" stroke="#666" stroke-width="1"/><rect x="57.5" y="76.5" width="15" height="15" fill="#fff" stroke="#666" stroke-width="1"/><rect x="76.5" y="76.5" width="15" height="15" fill="#fff" stroke="#666" stroke-width="1"/><rect x="95.5" y="76.5" width="15" height="15" fill="#fff" stroke="#666" stroke-width="1"/><rect x="114.5" y="76.5" width="15" height="15" fill="#fff" stroke="#666" stroke-width="1"/><rect x="133.5" y="76.5" width="15" height="15" fill="#fff" stroke="#666" stroke-width="1"/><rect x="152.5" y="76.5" width="15" height="15" fill="#fff" stroke="#666" stroke-width="1"/><rect x="171.5" y="76.5" width="15" height="15" fill="#fff" stroke="#666" stroke-width="1"/><rect x="0.5" y="95.5" width="15" height="15" fill="#fff" stroke="#666" stroke-width="1"/><rect x="19.5" y="95.5" width="15" height="15" fill="#fff" stroke="#666" stroke-width="1"/><rect x="38.5" y="95.5" width="15" height="15" fill="#fff" stroke="#666" stroke-width="1"/><rect x="57.5" y="95.5" width="15" height="15" fill="#fff" stroke="#666" stroke-width="1"/><rect x="76.5" y="95.5" width="15" height="15" fill="#fff" stroke="#666" stroke-width="1"/><rect x="95.5" y="95.5" width="15" height="15" fill="#fff" stroke="#666" stroke-width="1"/><rect x="114.5" y="95.5" width="15" height="15" fill="#fff" stroke="#666" stroke-width="1"/><rect x="133.5" y="95.5" width="15" height="15" fill="#fff" stroke="#666" stroke-width="1"/><rect x="152.5" y="95.5" width="15" height="15" fill="#fff" stroke="#666" stroke-width="1"/><rect x="171.5" y="95.5" width="15" height="15" fill="#fff" stroke="#666" stroke-width="1"/><rect x="0.5" y="114.5" width="15" height="15" fill="#fff" stroke="#666" stroke-width="1"/><rect x="19.5" y="114.5" width="15" height="15" fill="#fff" stroke="#666" stroke-width="1"/><rect x="38.5" y="114.5" width="15" height="15" fill="#fff" stroke="#666" stroke-width="1"/><rect x="57.5" y="114.5" width="15" height="15" fill="#fff" stroke="#666" stroke-width="1"/><rect x="76.5" y="114.5" width="15" height="15" fill="#fff" stroke="#666" stroke-width="1"/><rect x="95.5" y="114.5" width="15" height="15" fill="#fff" stroke="#666" stroke-width="1"/><rect x="114.5" y="114.5" width="15" height="15" fill="#fff" stroke="#666" stroke-width="1"/><rect x="133.5" y="114.5" width="15" height="15" fill="#fff" stroke="#666" stroke-width="1"/><rect x="152.5" y="114.5" width="15" height="15" fill="#fff" stroke="#666" stroke-width="1"/><rect x="171.5" y="114.5" width="15" height="15" fill="#fff" stroke="#666" stroke-width="1"/><rect x="0.5" y="133.5" width="15" height="15" fill="#fff" stroke="#666" stroke-width="1"/><rect x="19.5" y="133.5" width="15" height="15" fill="#fff" stroke="#666" stroke-width="1"/><rect x="38.5" y="133.5" width="15" height="15" fill="#fff" stroke="#666" stroke-width="1"/><rect x="57.5" y="133.5" width="15" height="15" fill="#fff" stroke="#666" stroke-width="1"/><rect x="76.5" y="133.5" width="15" height="15" fill="#fff" stroke="#666" stroke-width="1"/><rect x="95.5" y="133.5" width="15" height="15" fill="#fff" stroke="#666" stroke-width="1"/><rect x="114.5" y="133.5" width="15" height="15" fill="#fff" stroke="#666" stroke-width="1"/><rect x="133.5" y="133.5" width="15" height="15" fill="#fff" stroke="#666" stroke-width="1"/><rect x="152.5" y="133.5" width="15" height="15" fill="#fff" stroke="#666" stroke-width="1"/><rect x="171.5" y="133.5" width="15" height="15" fill="#fff" stroke="#666" stroke-width="1"/></svg>
<div class="a" style="left:65px;top:336px;width:195px;height:1px;background:#e1dfdd;z-index:6"></div>
<!-- menu icons -->
<svg style="left:77px;top:343px;z-index:6" width="17" height="17" fill="none" stroke-width="1"><rect x="0.5" y="0.5" width="15" height="15" fill="#fff" stroke="#333"/><rect x="1" y="1" width="14" height="3" fill="#cfcfcf" stroke="none"/><path d="M1 4.5 H15" stroke="#333"/><path d="M1 8.5 H15 M1 11.5 H15 M5.5 5 V15 M10.5 5 V15" stroke="#777"/></svg>
<svg style="left:77px;top:370px;z-index:6" width="18" height="17" fill="none" stroke-width="1"><path d="M9.5 0.5 H0.5 V15.5 H15.5 V9.5" fill="#fff" stroke="#333"/><rect x="1" y="1" width="8.5" height="3" fill="#cfcfcf" stroke="none"/><path d="M1 4.5 H8" stroke="#333"/><path d="M1 8.5 H6 M1 11.5 H7 M5.5 5 V15 M10.5 13 V15" stroke="#777"/><path d="M6.8 13.2 L7.6 10.2 L13.8 3.8 L16 6 L9.8 12.4 Z" fill="#8dc4f0" stroke="#1a73c8"/><path d="M12.6 5 L14.8 7.2" stroke="#1a73c8"/></svg>
<svg style="left:77px;top:398px;z-index:6" width="17" height="17" fill="none" stroke="#bdbdbd" stroke-width="1"><path d="M1 1.5 H7 M1 4 H7 M1 6.5 H4"/><path d="M3 8 C1 9 1 12 3 13 H7 M5.5 11.5 L7 13 L5.5 14.5"/><rect x="9.5" y="1.5" width="6" height="14"/><path d="M9.5 6 H15.5 M9.5 10.5 H15.5" stroke-dasharray="1.2 1"/></svg>
<svg style="left:77px;top:427px;z-index:6" width="17" height="17" fill="none" stroke-width="1"><path d="M6.5 15.5 H0.5 V0.5 H15.5 V6.5" fill="#fff" stroke="#333"/><rect x="1" y="1" width="14" height="3" fill="#cfcfcf" stroke="none"/><path d="M1 4.5 H15" stroke="#333"/><path d="M1 8.5 H6 M1 11.5 H6 M5.5 5 V15 M10.5 5 V6" stroke="#777"/><rect x="7" y="7" width="9" height="9" fill="#1f7a3f" stroke="none"/><path d="M9.3 9.2 L13.7 13.8 M13.7 9.2 L9.3 13.8" stroke="#fff" stroke-width="1.2"/></svg>
<svg style="left:77px;top:455px;z-index:6" width="17" height="17" fill="none" stroke-width="1"><rect x="0.5" y="0.5" width="15" height="15" fill="#fff" stroke="#333"/><rect x="1" y="1" width="14" height="3" fill="#cfcfcf" stroke="none"/><path d="M1 4.5 H15" stroke="#333"/><path d="M1 8.5 H15 M1 11.5 H15 M5.5 5 V15 M10.5 5 V15" stroke="#777"/></svg>
<svg style="left:246px;top:458px;z-index:6" width="8" height="10" fill="none" stroke="#444" stroke-width="1.1"><path d="M1 1 L5.5 4.8 L1 8.6"/></svg>

<!-- annotations -->
<svg style="left:0;top:0;z-index:10" width="1009" height="687">
 <rect x="124.5" y="39.5" width="51" height="26" rx="5" fill="none" stroke="#000" stroke-width="3"/>
 <rect x="63.5" y="364.5" width="197" height="31" rx="4" fill="none" stroke="#000" stroke-width="3"/>
 <line x1="401" y1="245.5" x2="100" y2="137" stroke="#000" stroke-width="3.5"/>
 <polygon points="89,132 107.5,132.5 103,142.5" fill="#000"/>
 <line x1="459" y1="474" x2="270" y2="398.5" stroke="#000" stroke-width="3.5"/>
 <polygon points="261.5,394.5 277,395.5 273,405.5" fill="#000"/>
 <path d="M467.5 427.5 V444 L471.5 440.5 L474.5 446.5 L477 445.5 L474.3 439.5 L479 439.3 Z" fill="#fff" stroke="#1a1a1a" stroke-width="1" stroke-linejoin="round"/>
</svg>
</body></html>
